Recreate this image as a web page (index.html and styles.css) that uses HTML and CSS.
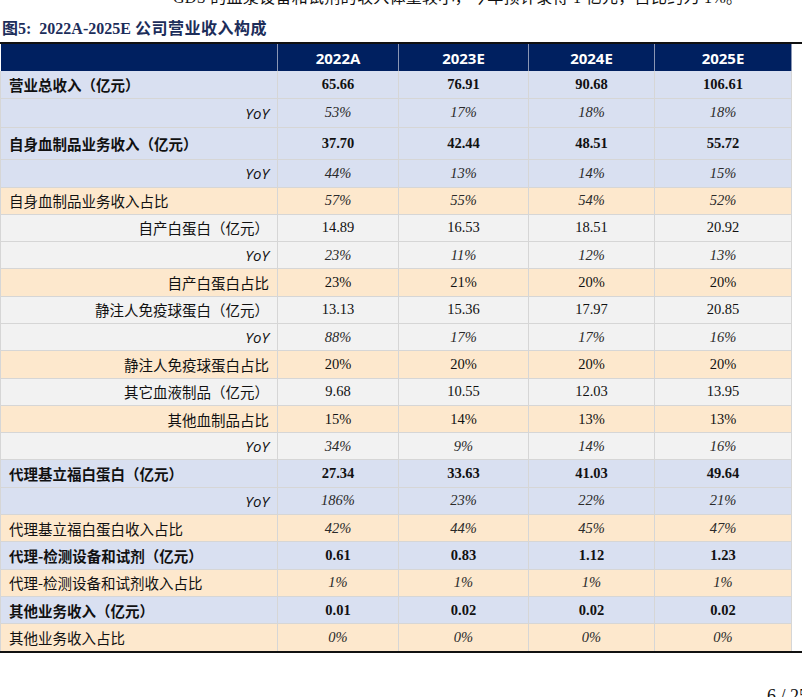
FILE: index.html
```html
<!DOCTYPE html>
<html lang="zh-CN">
<head>
<meta charset="utf-8">
<title>2022A-2025E 公司营业收入构成</title>
<link rel="stylesheet" href="styles.css">
</head>
<body>
<div class="page">
  <p class="lead">GDS 的血浆设备和试剂的收入体量较小，今年预计录得 1 亿元，占比约为 1%。</p>
  <p class="caption">图5:&nbsp; 2022A-2025E <span class="cjk">公司营业收入构成</span></p>
  <div class="tablewrap">
    <table class="rev">
      <colgroup>
        <col class="c0"><col class="c1"><col class="c2"><col class="c3"><col class="c4">
      </colgroup>
      <thead>
        <tr class="head">
          <th></th><th>2022A</th><th>2023E</th><th>2024E</th><th>2025E</th>
        </tr>
      </thead>
      <tbody>
        <tr class="blue main h27"><td class="lbl">营业总收入（亿元）</td><td>65.66</td><td>76.91</td><td>90.68</td><td>106.61</td></tr>
        <tr class="blue pct h29"><td class="lbl r yoy">YoY</td><td>53%</td><td>17%</td><td>18%</td><td>18%</td></tr>
        <tr class="blue main h32"><td class="lbl">自身血制品业务收入（亿元）</td><td>37.70</td><td>42.44</td><td>48.51</td><td>55.72</td></tr>
        <tr class="blue pct h28"><td class="lbl r yoy">YoY</td><td>44%</td><td>13%</td><td>14%</td><td>15%</td></tr>
        <tr class="orange pct"><td class="lbl">自身血制品业务收入占比</td><td>57%</td><td>55%</td><td>54%</td><td>52%</td></tr>
        <tr class="gray"><td class="lbl r">自产白蛋白（亿元）</td><td>14.89</td><td>16.53</td><td>18.51</td><td>20.92</td></tr>
        <tr class="gray pct"><td class="lbl r yoy">YoY</td><td>23%</td><td>11%</td><td>12%</td><td>13%</td></tr>
        <tr class="orange"><td class="lbl r">自产白蛋白占比</td><td>23%</td><td>21%</td><td>20%</td><td>20%</td></tr>
        <tr class="gray"><td class="lbl r">静注人免疫球蛋白（亿元）</td><td>13.13</td><td>15.36</td><td>17.97</td><td>20.85</td></tr>
        <tr class="gray pct"><td class="lbl r yoy">YoY</td><td>88%</td><td>17%</td><td>17%</td><td>16%</td></tr>
        <tr class="orange"><td class="lbl r">静注人免疫球蛋白占比</td><td>20%</td><td>20%</td><td>20%</td><td>20%</td></tr>
        <tr class="gray"><td class="lbl r">其它血液制品（亿元）</td><td>9.68</td><td>10.55</td><td>12.03</td><td>13.95</td></tr>
        <tr class="orange"><td class="lbl r">其他血制品占比</td><td>15%</td><td>14%</td><td>13%</td><td>13%</td></tr>
        <tr class="gray pct"><td class="lbl r yoy">YoY</td><td>34%</td><td>9%</td><td>14%</td><td>16%</td></tr>
        <tr class="blue main"><td class="lbl">代理基立福白蛋白（亿元）</td><td>27.34</td><td>33.63</td><td>41.03</td><td>49.64</td></tr>
        <tr class="blue pct"><td class="lbl r yoy">YoY</td><td>186%</td><td>23%</td><td>22%</td><td>21%</td></tr>
        <tr class="orange pct"><td class="lbl">代理基立福白蛋白收入占比</td><td>42%</td><td>44%</td><td>45%</td><td>47%</td></tr>
        <tr class="blue main"><td class="lbl">代理-检测设备和试剂（亿元）</td><td>0.61</td><td>0.83</td><td>1.12</td><td>1.23</td></tr>
        <tr class="orange pct"><td class="lbl">代理-检测设备和试剂收入占比</td><td>1%</td><td>1%</td><td>1%</td><td>1%</td></tr>
        <tr class="blue main"><td class="lbl">其他业务收入（亿元）</td><td>0.01</td><td>0.02</td><td>0.02</td><td>0.02</td></tr>
        <tr class="orange pct"><td class="lbl">其他业务收入占比</td><td>0%</td><td>0%</td><td>0%</td><td>0%</td></tr>
      </tbody>
    </table>
  </div>
  <p class="pageno">6 / 25</p>
</div>
</body>
</html>
```

FILE: styles.css
```css
html, body {
  margin: 0;
  padding: 0;
  background: #ffffff;
}

.page {
  width: 802px;
  height: 697px;
  overflow: hidden;
  font-family: "Liberation Serif", "Noto Sans CJK SC", serif;
  color: #111;
}

.lead {
  margin: -12px 0 0;
  height: 20px;
  line-height: 20px;
  padding-left: 173px;
  font-size: 16px;
  letter-spacing: 0.3px;
  white-space: nowrap;
  color: #111;
}

.caption {
  margin: 0 0 2px;
  padding: 10px 0 0 2px;
  height: 22px;
  line-height: 22px;
  font-size: 16px;
  font-weight: bold;
  color: #1c2d5a;
  white-space: nowrap;
}

.caption .cjk {
  letter-spacing: 0.5px;
}

.tablewrap {
  border-top: 2px solid #111;
  border-bottom: 2px solid #111;
  width: 802px;
}

.rev {
  border-collapse: collapse;
  table-layout: fixed;
  width: 791px;
}

.c0 { width: 277px; }
.c1 { width: 121px; }
.c2 { width: 130px; }
.c3 { width: 126px; }
.c4 { width: 137px; }

.rev th,
.rev td {
  padding: 0;
  text-align: center;
  vertical-align: middle;
  white-space: nowrap;
}

.rev td {
  border: 1px solid #d6d6d6;
  font-family: "Liberation Serif", serif;
  font-size: 14.5px;
  color: #111;
}

.rev tr:first-child td { border-top: none; }
.rev tbody tr:last-child td { border-bottom: none; }

.head {
  height: 27px;
  background: #002060;
}

.head th {
  border-left: 1px solid #8a96b4;
  border-right: 1px solid #8a96b4;
  font-family: "Open Sans", "Liberation Sans", sans-serif;
  font-size: 15px;
  font-weight: bold;
  color: #ffffff;
}

.head th:first-child { border-left: none; }

.rev tbody tr { height: 27.3px; }
.rev tbody tr.h27 { height: 27px; }
.rev tbody tr.h28 { height: 28px; }
.rev tbody tr.h29 { height: 29px; }
.rev tbody tr.h32 { height: 32px; }

.blue td { background: #d9e0f1; }
.orange td { background: #fde8cd; }
.gray td { background: #f2f2f2; }

.main td { font-weight: bold; }
.pct td { font-style: italic; color: #2a2a2a; }

.rev td.lbl {
  text-align: left;
  padding-left: 8px;
  font-family: "Noto Sans CJK SC", sans-serif;
  font-size: 14.5px;
  font-style: normal;
  color: #111;
}

.rev td.lbl.r {
  text-align: right;
  padding-left: 0;
  padding-right: 8px;
}

.rev td.yoy {
  font-family: "Open Sans", "Liberation Sans", sans-serif;
  font-style: italic;
  font-size: 15px;
  padding-right: 9px;
}

.pageno {
  margin: 32px 0 0 767px;
  font-size: 18px;
  line-height: 22px;
  white-space: nowrap;
  color: #111;
}
```
